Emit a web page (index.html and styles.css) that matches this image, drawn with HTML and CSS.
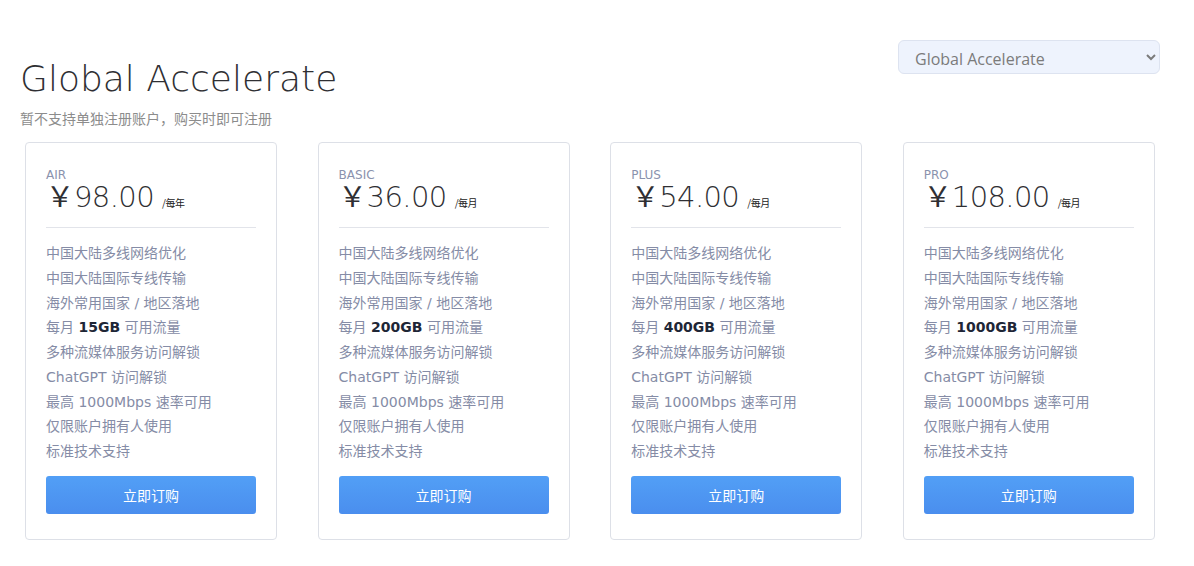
FILE: index.html
```html
<!DOCTYPE html>
<html>
<head>
    <title>Global Accelerate</title>
    <meta charset="UTF-8">
    <link rel="stylesheet" href="styles.css">
</head>
<body>
    <div class="page">
        <div class="header">
            <div class="heading">
                <h1>Global Accelerate</h1>
                <p class="subtitle">暂不支持单独注册账户，购买时即可注册</p>
            </div>
            <select class="group-select">
                <option>Global Accelerate</option>
            </select>
        </div>

        <div class="plans">
            <div class="plan">
                <div class="plan-name">AIR</div>
                <div class="price"><span class="yen">￥</span><span class="amount">98.00</span><span class="cycle">/每年</span></div>
                <ul class="features">
                    <li>中国大陆多线网络优化</li>
                    <li>中国大陆国际专线传输</li>
                    <li>海外常用国家 / 地区落地</li>
                    <li>每月 <b>15GB</b> 可用流量</li>
                    <li>多种流媒体服务访问解锁</li>
                    <li>ChatGPT 访问解锁</li>
                    <li>最高 1000Mbps 速率可用</li>
                    <li>仅限账户拥有人使用</li>
                    <li>标准技术支持</li>
                </ul>
                <button class="buy">立即订购</button>
            </div>
            <div class="plan">
                <div class="plan-name">BASIC</div>
                <div class="price"><span class="yen">￥</span><span class="amount">36.00</span><span class="cycle">/每月</span></div>
                <ul class="features">
                    <li>中国大陆多线网络优化</li>
                    <li>中国大陆国际专线传输</li>
                    <li>海外常用国家 / 地区落地</li>
                    <li>每月 <b>200GB</b> 可用流量</li>
                    <li>多种流媒体服务访问解锁</li>
                    <li>ChatGPT 访问解锁</li>
                    <li>最高 1000Mbps 速率可用</li>
                    <li>仅限账户拥有人使用</li>
                    <li>标准技术支持</li>
                </ul>
                <button class="buy">立即订购</button>
            </div>
            <div class="plan">
                <div class="plan-name">PLUS</div>
                <div class="price"><span class="yen">￥</span><span class="amount">54.00</span><span class="cycle">/每月</span></div>
                <ul class="features">
                    <li>中国大陆多线网络优化</li>
                    <li>中国大陆国际专线传输</li>
                    <li>海外常用国家 / 地区落地</li>
                    <li>每月 <b>400GB</b> 可用流量</li>
                    <li>多种流媒体服务访问解锁</li>
                    <li>ChatGPT 访问解锁</li>
                    <li>最高 1000Mbps 速率可用</li>
                    <li>仅限账户拥有人使用</li>
                    <li>标准技术支持</li>
                </ul>
                <button class="buy">立即订购</button>
            </div>
            <div class="plan">
                <div class="plan-name">PRO</div>
                <div class="price"><span class="yen">￥</span><span class="amount">108.00</span><span class="cycle">/每月</span></div>
                <ul class="features">
                    <li>中国大陆多线网络优化</li>
                    <li>中国大陆国际专线传输</li>
                    <li>海外常用国家 / 地区落地</li>
                    <li>每月 <b>1000GB</b> 可用流量</li>
                    <li>多种流媒体服务访问解锁</li>
                    <li>ChatGPT 访问解锁</li>
                    <li>最高 1000Mbps 速率可用</li>
                    <li>仅限账户拥有人使用</li>
                    <li>标准技术支持</li>
                </ul>
                <button class="buy">立即订购</button>
            </div>
        </div>
    </div>
</body>
</html>
```

FILE: styles.css
```css
body {
    margin: 0;
    font-family: 'DejaVu Sans', 'Noto Sans CJK SC', sans-serif;
    background: #ffffff;
    color: #333333;
}
.page {
    padding: 40px 34px 0 20px;
}
.header {
    display: flex;
    justify-content: space-between;
    align-items: flex-start;
}
h1 {
    margin: 17px 0 0;
    font-size: 36px;
    font-weight: 300;
    line-height: 44px;
    color: #2f2f33;
}
.subtitle {
    margin: 7px 0 0;
    font-size: 14px;
    line-height: 20px;
    color: #8c8c8c;
    font-family: 'Noto Sans CJK SC', sans-serif;
}
.group-select {
    width: 262px;
    height: 34px;
    padding: 3px 10px 0 12px;
    border: 1px solid #dde3f0;
    border-radius: 6px;
    background-color: #eef3fd;
    color: #7b7b7b;
    font-family: 'Open Sans', sans-serif;
    font-size: 16px;
}
.plans {
    display: grid;
    grid-template-columns: repeat(4, 252px);
    column-gap: 40.6px;
    margin: 14px 0 0 5px;
}
.plan {
    border: 1px solid #dde0e7;
    border-radius: 4px;
    padding: 24px 20px 25px;
}
.plan-name {
    font-size: 12px;
    line-height: 16px;
    color: #8a92ad;
}
.price {
    display: flex;
    align-items: baseline;
    height: 29px;
    margin-top: -2px;
    color: #2f2f33;
}
.yen {
    font-family: 'Noto Sans CJK SC', sans-serif;
    font-size: 28px;
    line-height: 29px;
}
.amount {
    font-size: 29px;
    line-height: 29px;
    font-weight: 300;
    letter-spacing: -0.6px;
}
.cycle {
    margin-left: 8px;
    font-size: 10px;
    color: #222222;
    font-family: 'Noto Sans CJK SC', sans-serif;
    letter-spacing: -0.5px;
}
.features {
    list-style: none;
    margin: 17px 0 0;
    padding: 13px 0 0;
    border-top: 1px solid #e2e4ea;
    font-size: 14px;
    line-height: 24.75px;
    color: #858ca6;
}
.features b {
    color: #1e2636;
}
.buy {
    display: block;
    width: 100%;
    height: 38px;
    margin-top: 12px;
    border: none;
    border-radius: 3px;
    background: linear-gradient(#529ff6, #4a8eee);
    color: #ffffff;
    font-family: 'Noto Sans CJK SC', sans-serif;
    font-size: 14px;
}
```
